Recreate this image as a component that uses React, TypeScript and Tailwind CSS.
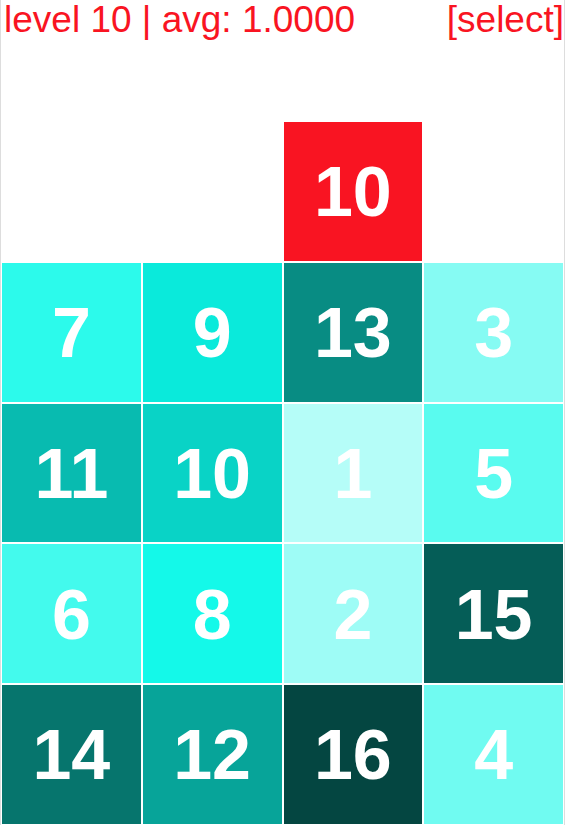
const RED = 'bg-[#f91422]';

const tiles: { value: number; color: string }[] = [
  { value: 7, color: 'bg-[#2cfaeb]' },
  { value: 9, color: 'bg-[#0aeadb]' },
  { value: 13, color: 'bg-[#088c83]' },
  { value: 3, color: 'bg-[#86fbf3]' },
  { value: 11, color: 'bg-[#08bbb0]' },
  { value: 10, color: 'bg-[#09d3c6]' },
  { value: 1, color: 'bg-[#b5fdf8]' },
  { value: 5, color: 'bg-[#59fbef]' },
  { value: 6, color: 'bg-[#43faed]' },
  { value: 8, color: 'bg-[#14f9e9]' },
  { value: 2, color: 'bg-[#9efcf6]' },
  { value: 15, color: 'bg-[#055d57]' },
  { value: 14, color: 'bg-[#06756d]' },
  { value: 12, color: 'bg-[#07a499]' },
  { value: 16, color: 'bg-[#044641]' },
  { value: 4, color: 'bg-[#70fbf1]' },
];

function Tile({ value, color }: { value: number; color: string }) {
  return (
    <button
      type="button"
      className={`flex aspect-square items-center justify-center pt-0.5 text-[70px] leading-none font-bold text-white ${color}`}
    >
      {value}
    </button>
  );
}

export default function App() {
  return (
    <main className="min-h-screen border-x border-[#dddddd] bg-white font-['Liberation_Sans',Arial,sans-serif]">
      <header className="flex h-[122px] items-start justify-between pl-[3px] text-[37px] leading-10 whitespace-nowrap text-[#f91422]">
        <h1>level 10 | avg: 1.0000</h1>
        <button type="button">[select]</button>
      </header>
      <div className="grid grid-cols-4 gap-0.5 px-px">
        <div className="col-start-3 grid">
          <Tile value={10} color={RED} />
        </div>
        <div />
        {tiles.map((tile) => (
          <Tile key={tile.value} value={tile.value} color={tile.color} />
        ))}
      </div>
    </main>
  );
}
